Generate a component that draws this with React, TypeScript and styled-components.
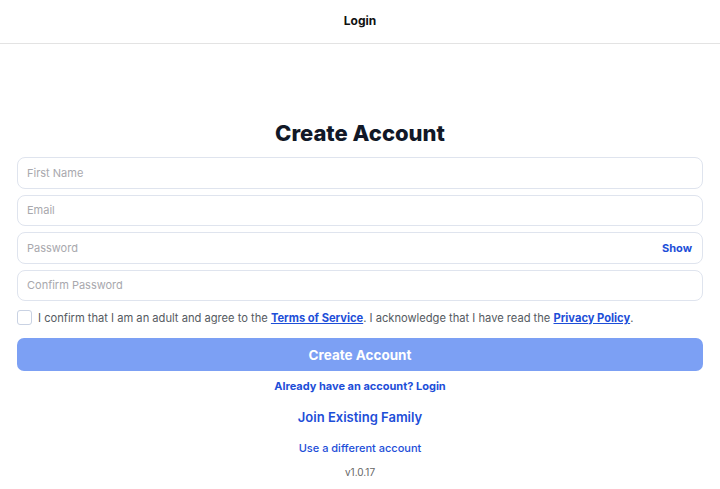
import styled, { createGlobalStyle } from "styled-components";

const GlobalStyle = createGlobalStyle`
  html, body {
    margin: 0;
    padding: 0;
    background: #ffffff;
    font-family: Inter, "Noto Sans", sans-serif;
  }
  * {
    box-sizing: border-box;
  }
`;

const Page = styled.div`
  width: 720px;
  height: 489px;
  display: flex;
  flex-direction: column;
  overflow: hidden;
`;

const Header = styled.header`
  height: 44px;
  border-bottom: 1px solid #e3e3e3;
  display: flex;
  align-items: center;
  justify-content: center;
`;

const HeaderTitle = styled.h1`
  margin: 0;
  font-size: 12px;
  font-weight: 700;
  color: #111;
  padding-bottom: 2px;
`;

const Main = styled.main`
  padding: 76px 17px 0;
  display: flex;
  flex-direction: column;
`;

const Title = styled.h2`
  margin: 0 0 10px;
  text-align: center;
  font-size: 22px;
  font-weight: 800;
  color: #111827;
  line-height: 27px;
`;

const Fields = styled.div`
  display: flex;
  flex-direction: column;
  gap: 6px;
`;

const Field = styled.div`
  height: 31.5px;
  border: 1px solid #dfe4ee;
  border-radius: 8px;
  display: flex;
  align-items: center;
  padding: 0 10px 0 9px;
`;

const Input = styled.input`
  flex: 1;
  border: none;
  outline: none;
  background: transparent;
  font-family: inherit;
  font-size: 11px;
  color: #222;
  padding: 0;
  &::placeholder {
    color: #a8a8ad;
  }
`;

const ShowButton = styled.button`
  border: none;
  background: none;
  padding: 0;
  font-family: inherit;
  font-size: 11px;
  font-weight: 700;
  color: #1d4ed8;
`;

const Consent = styled.label`
  display: flex;
  align-items: center;
  gap: 6px;
  margin-top: 9px;
  font-size: 11.15px;
  color: #555a61;
`;

const Box = styled.span`
  width: 15px;
  height: 15px;
  border: 1px solid #c9d2e3;
  border-radius: 3px;
  flex-shrink: 0;
`;

const Legal = styled.a`
  color: #1d4ed8;
  font-weight: 700;
  text-decoration: underline;
`;

const Submit = styled.button`
  margin-top: 13px;
  height: 33px;
  border: none;
  border-radius: 7px;
  background: #7ca0f4;
  color: #fff;
  font-family: inherit;
  font-size: 13.5px;
  font-weight: 700;
`;

const Links = styled.div`
  display: flex;
  flex-direction: column;
  align-items: center;
`;

const TextLink = styled.a<{ $size: number; $weight: number; $top: number }>`
  margin-top: ${(p) => p.$top}px;
  color: #1d4ed8;
  font-size: ${(p) => p.$size}px;
  font-weight: ${(p) => p.$weight};
  text-decoration: none;
  line-height: 16px;
`;

const Version = styled.span`
  margin-top: 9px;
  font-size: 10px;
  color: #666;
  line-height: 14px;
`;

export default function App() {
  return (
    <>
      <GlobalStyle />
      <Page>
        <Header>
          <HeaderTitle>Login</HeaderTitle>
        </Header>
        <Main>
          <Title>Create Account</Title>
          <Fields>
            <Field>
              <Input placeholder="First Name" />
            </Field>
            <Field>
              <Input placeholder="Email" />
            </Field>
            <Field>
              <Input placeholder="Password" type="password" />
              <ShowButton>Show</ShowButton>
            </Field>
            <Field>
              <Input placeholder="Confirm Password" type="password" />
            </Field>
          </Fields>
          <Consent>
            <Box />
            <span>
              I confirm that I am an adult and agree to the{" "}
              <Legal>Terms of Service</Legal>. I acknowledge that I have read
              the <Legal>Privacy Policy</Legal>.
            </span>
          </Consent>
          <Submit>Create Account</Submit>
          <Links>
            <TextLink $size={11} $weight={700} $top={7}>
              Already have an account? Login
            </TextLink>
            <TextLink $size={13} $weight={600} $top={15}>
              Join Existing Family
            </TextLink>
            <TextLink $size={11} $weight={500} $top={15}>
              Use a different account
            </TextLink>
            <Version>v1.0.17</Version>
          </Links>
        </Main>
      </Page>
    </>
  );
}
